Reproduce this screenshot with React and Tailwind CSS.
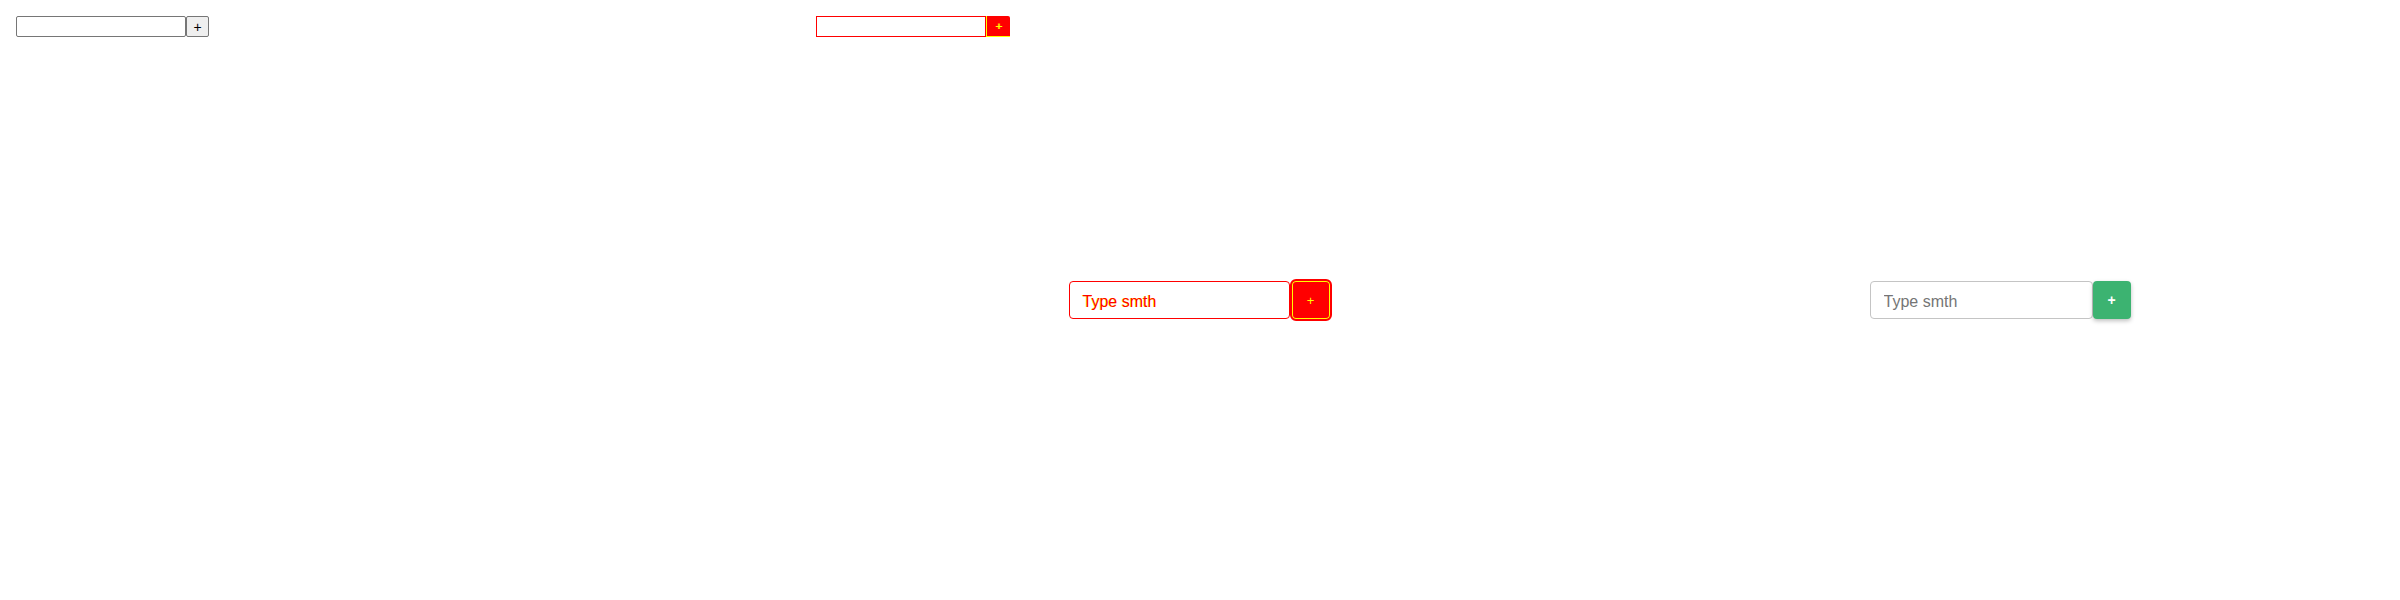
import { useState } from 'react';

const font = { fontFamily: '"Liberation Sans", Arial, sans-serif' };

// plain browser-default look
const PlainForm = () => {
  const [value, setValue] = useState('');
  return (
    <div className="flex items-start">
      <input
        value={value}
        onChange={(e) => setValue(e.target.value)}
        className="w-[170px] h-[21px] border border-[#767676] rounded-[2px] bg-white px-[2px] text-[13px] outline-none"
      />
      <button className="w-[23px] h-[21px] border border-[#767676] rounded-[2px] bg-[#efefef] text-[14px] leading-none text-black flex items-center justify-center">
        +
      </button>
    </div>
  );
};

// same form with debug outlines
const DebugPlainForm = () => (
  <div className="flex items-start">
    <input className="w-[170px] h-[21px] border border-[#ff0000] bg-white px-[2px] text-[13px] outline-none" />
    <button className="w-[24px] h-[21px] bg-[#ff0000] border-l border-b border-[#ffff00] rounded-tr-[2px] text-[11px] leading-none text-[#ffff00] flex items-center justify-center [text-shadow:1px_0_0_#ffff00]">
      +
    </button>
  </div>
);

const DebugStyledForm = () => (
  <div className="flex items-center">
    <div className="w-[221px] h-[38px] border border-[#ff0000] rounded-[4px] bg-white flex items-center pl-[13px] pt-[3px] text-[16px] text-[#ff0000] [text-shadow:-0.5px_0_0_#ffff00]">
      Type smth
    </div>
    <button className="w-[42px] h-[42px] rounded-[6px] border-2 border-[#ff0000] bg-[#ff0000] shadow-[inset_0_0_0_1px_#ffff00] text-[13px] leading-none text-[#ffff00] flex items-center justify-center">
      +
    </button>
  </div>
);

const StyledForm = () => {
  const [value, setValue] = useState('');
  return (
    <div className="flex items-center">
      <input
        value={value}
        onChange={(e) => setValue(e.target.value)}
        placeholder="Type smth"
        className="w-[223px] h-[38px] border border-[#c4c4c4] rounded-[4px] bg-white pl-[13px] pt-[3px] text-[16px] text-[#333] placeholder:text-[#757575] outline-none"
      />
      <button className="w-[38px] h-[38px] rounded-[4px] bg-[#3cb371] text-white text-[14px] font-bold leading-none flex items-center justify-center shadow-[0_2px_4px_rgba(0,0,0,0.25)]">
        +
      </button>
    </div>
  );
};

const App = () => {
  return (
    <div className="flex w-[2400px] h-[600px] bg-white" style={font}>
      <div className="w-[800px] h-full p-4">
        <PlainForm />
      </div>

      <div className="w-[800px] h-full grid">
        <div className="col-start-1 row-start-1 p-4">
          <DebugPlainForm />
        </div>
        <div className="col-start-1 row-start-1 flex items-center justify-center">
          <DebugStyledForm />
        </div>
      </div>

      <div className="w-[800px] h-full flex items-center justify-center">
        <StyledForm />
      </div>
    </div>
  );
};

export default App;
